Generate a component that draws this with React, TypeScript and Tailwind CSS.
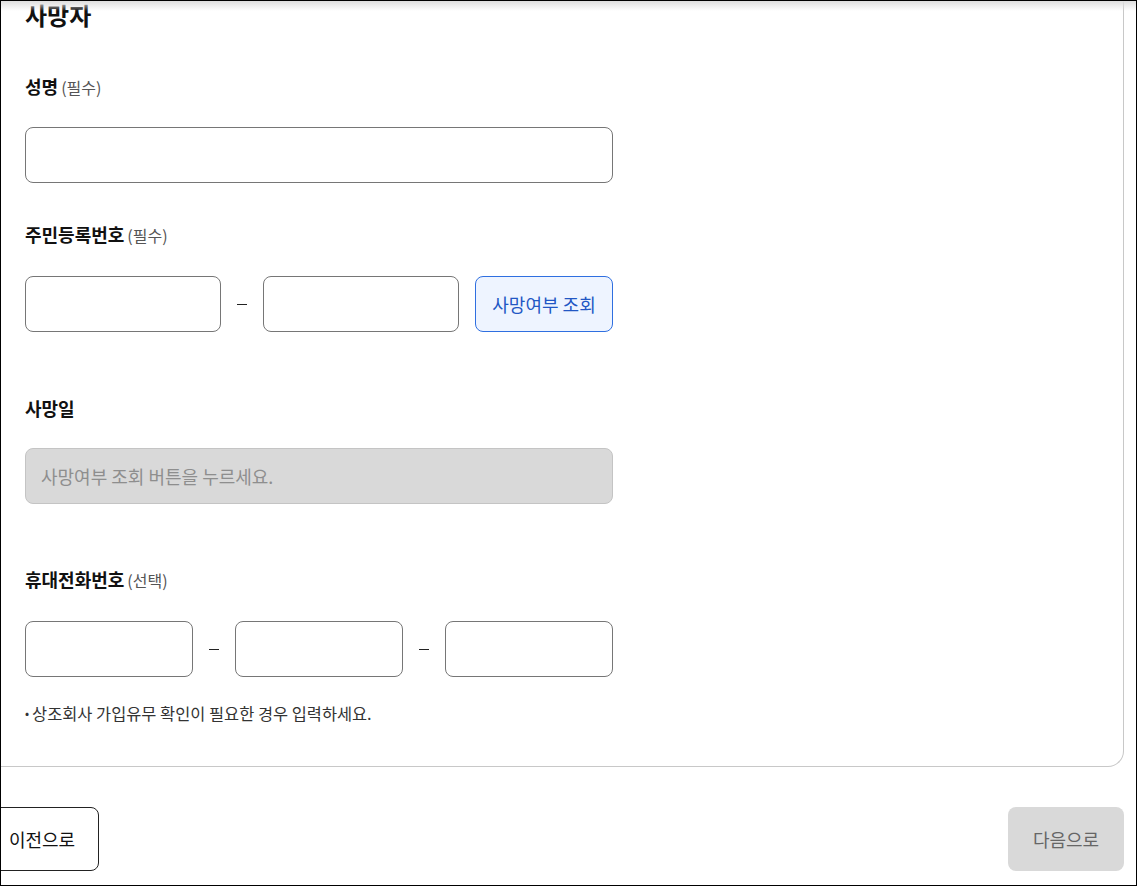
import React from "react";

const font = { fontFamily: '"Noto Sans CJK KR", "Noto Sans", sans-serif' };

function Label({ text, note }: { text: string; note?: string }) {
  return (
    <div className="flex items-baseline gap-[3px] h-[24px] leading-[24px]">
      <span className="text-[18px] font-bold text-[#111]">{text}</span>
      {note && <span className="text-[16px] text-[#555]">{note}</span>}
    </div>
  );
}

function Field({ className = "" }: { className?: string }) {
  return (
    <input
      type="text"
      className={`h-[56px] rounded-[8px] border border-[#767676] bg-white px-4 text-[18px] outline-none ${className}`}
    />
  );
}

function Dash() {
  return (
    <div className="w-[42px] shrink-0 flex items-center justify-center">
      <span className="block w-[10px] h-px bg-[#222]" />
    </div>
  );
}

export default function App() {
  return (
    <div
      style={font}
      className="relative w-[1137px] h-[886px] border border-black overflow-hidden bg-white"
    >
      <div className="absolute top-0 left-0 right-0 h-[10px] bg-gradient-to-b from-[#dedede] to-transparent" />

      <div className="ml-[-16px] mr-[12px]">
        <div className="border border-t-0 border-[#c8c8c8] rounded-b-[16px] pl-[39px] pb-[43px]">
          <h2 className="text-[24px] font-bold text-[#111] leading-[32px] mt-[-2px]">사망자</h2>

          <div className="mt-[43px]">
            <Label text="성명" note="(필수)" />
          </div>
          <Field className="mt-[29px] w-[588px] block" />

          <div className="mt-[39px]">
            <Label text="주민등록번호" note="(필수)" />
          </div>
          <div className="mt-[30px] flex w-[588px]">
            <Field className="w-[196px]" />
            <Dash />
            <Field className="w-[196px]" />
            <button className="ml-[16px] w-[138px] h-[56px] rounded-[8px] border border-[#2f6fe0] bg-[#eef4ff] text-[18px] text-[#2257c4]">
              사망여부 조회
            </button>
          </div>

          <div className="mt-[64px]">
            <Label text="사망일" />
          </div>
          <div className="mt-[28px] w-[588px] h-[56px] rounded-[8px] border border-[#c4c4c4] bg-[#d9d9d9] flex items-center px-[15px] text-[18px] text-[#8e8e8e]">
            사망여부 조회 버튼을 누르세요.
          </div>

          <div className="mt-[63px]">
            <Label text="휴대전화번호" note="(선택)" />
          </div>
          <div className="mt-[30px] flex w-[588px]">
            <Field className="w-[168px]" />
            <Dash />
            <Field className="w-[168px]" />
            <Dash />
            <Field className="w-[168px]" />
          </div>

          <p className="mt-[26px] h-[20px] leading-[20px] text-[16.4px] text-[#333] flex items-center gap-[3px]">
            <span className="text-[12px]">•</span>
            <span>상조회사 가입유무 확인이 필요한 경우 입력하세요.</span>
          </p>
        </div>

        <div className="mt-[40px] flex justify-between">
          <button className="h-[64px] w-[114px] rounded-[8px] border border-[#222] bg-white text-[18px] text-[#111]">
            이전으로
          </button>
          <button className="h-[64px] w-[116px] rounded-[8px] bg-[#d9d9d9] text-[18px] text-[#666]">
            다음으로
          </button>
        </div>
      </div>
    </div>
  );
}
